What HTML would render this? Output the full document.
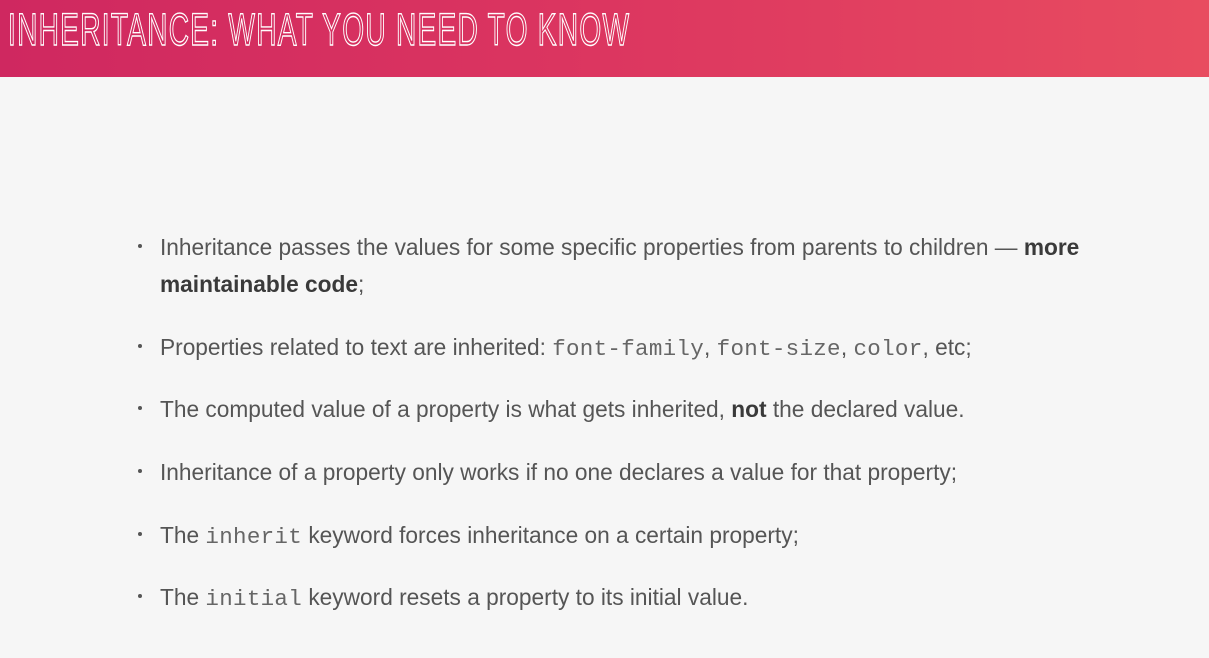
<!DOCTYPE html>
<html><head><meta charset="utf-8"><style>
html,body{margin:0;padding:0;width:1209px;height:658px;overflow:hidden;background:#f6f6f6;}
.hdr{position:absolute;left:0;top:0;width:1209px;height:77px;background:linear-gradient(90deg,#cf2860 0%,#dc3660 50%,#e84c60 100%);}
.title{position:absolute;left:8px;top:6px;font-family:"Liberation Sans",sans-serif;font-size:45px;line-height:48px;color:transparent;-webkit-text-stroke:1.4px #fff;transform-origin:0 0;transform:scaleX(0.625);white-space:nowrap;letter-spacing:2px;}
.l{position:absolute;left:160px;font-family:"Liberation Sans",sans-serif;font-size:22.7px;color:#555;white-space:nowrap;line-height:30px;}
.b{position:absolute;left:138px;width:4px;height:4px;border-radius:50%;background:#555;}
code{font-family:"Liberation Mono",monospace;font-size:22.5px;color:#666;letter-spacing:0.3px;}
b{color:#3a3a3a;}
</style></head><body>
<div class="hdr"><div class="title">INHERITANCE: WHAT YOU NEED TO KNOW</div></div>

<div class="b" style="top:244px"></div>
<div class="l" style="top:232px">Inheritance passes the values for some specific properties from parents to children — <b>more</b></div>
<div class="l" style="top:269px"><b>maintainable code</b>;</div>

<div class="b" style="top:344px"></div>
<div class="l" style="top:332px">Properties related to text are inherited: <code>font-family</code>, <code>font-size</code>, <code>color</code>, etc;</div>

<div class="b" style="top:406px"></div>
<div class="l" style="top:394px">The computed value of a property is what gets inherited, <b>not</b> the declared value.</div>

<div class="b" style="top:469px"></div>
<div class="l" style="top:457px">Inheritance of a property only works if no one declares a value for that property;</div>

<div class="b" style="top:532px"></div>
<div class="l" style="top:520px">The <code>inherit</code> keyword forces inheritance on a certain property;</div>

<div class="b" style="top:594px"></div>
<div class="l" style="top:582px">The <code>initial</code> keyword resets a property to its initial value.</div>
</body></html>
